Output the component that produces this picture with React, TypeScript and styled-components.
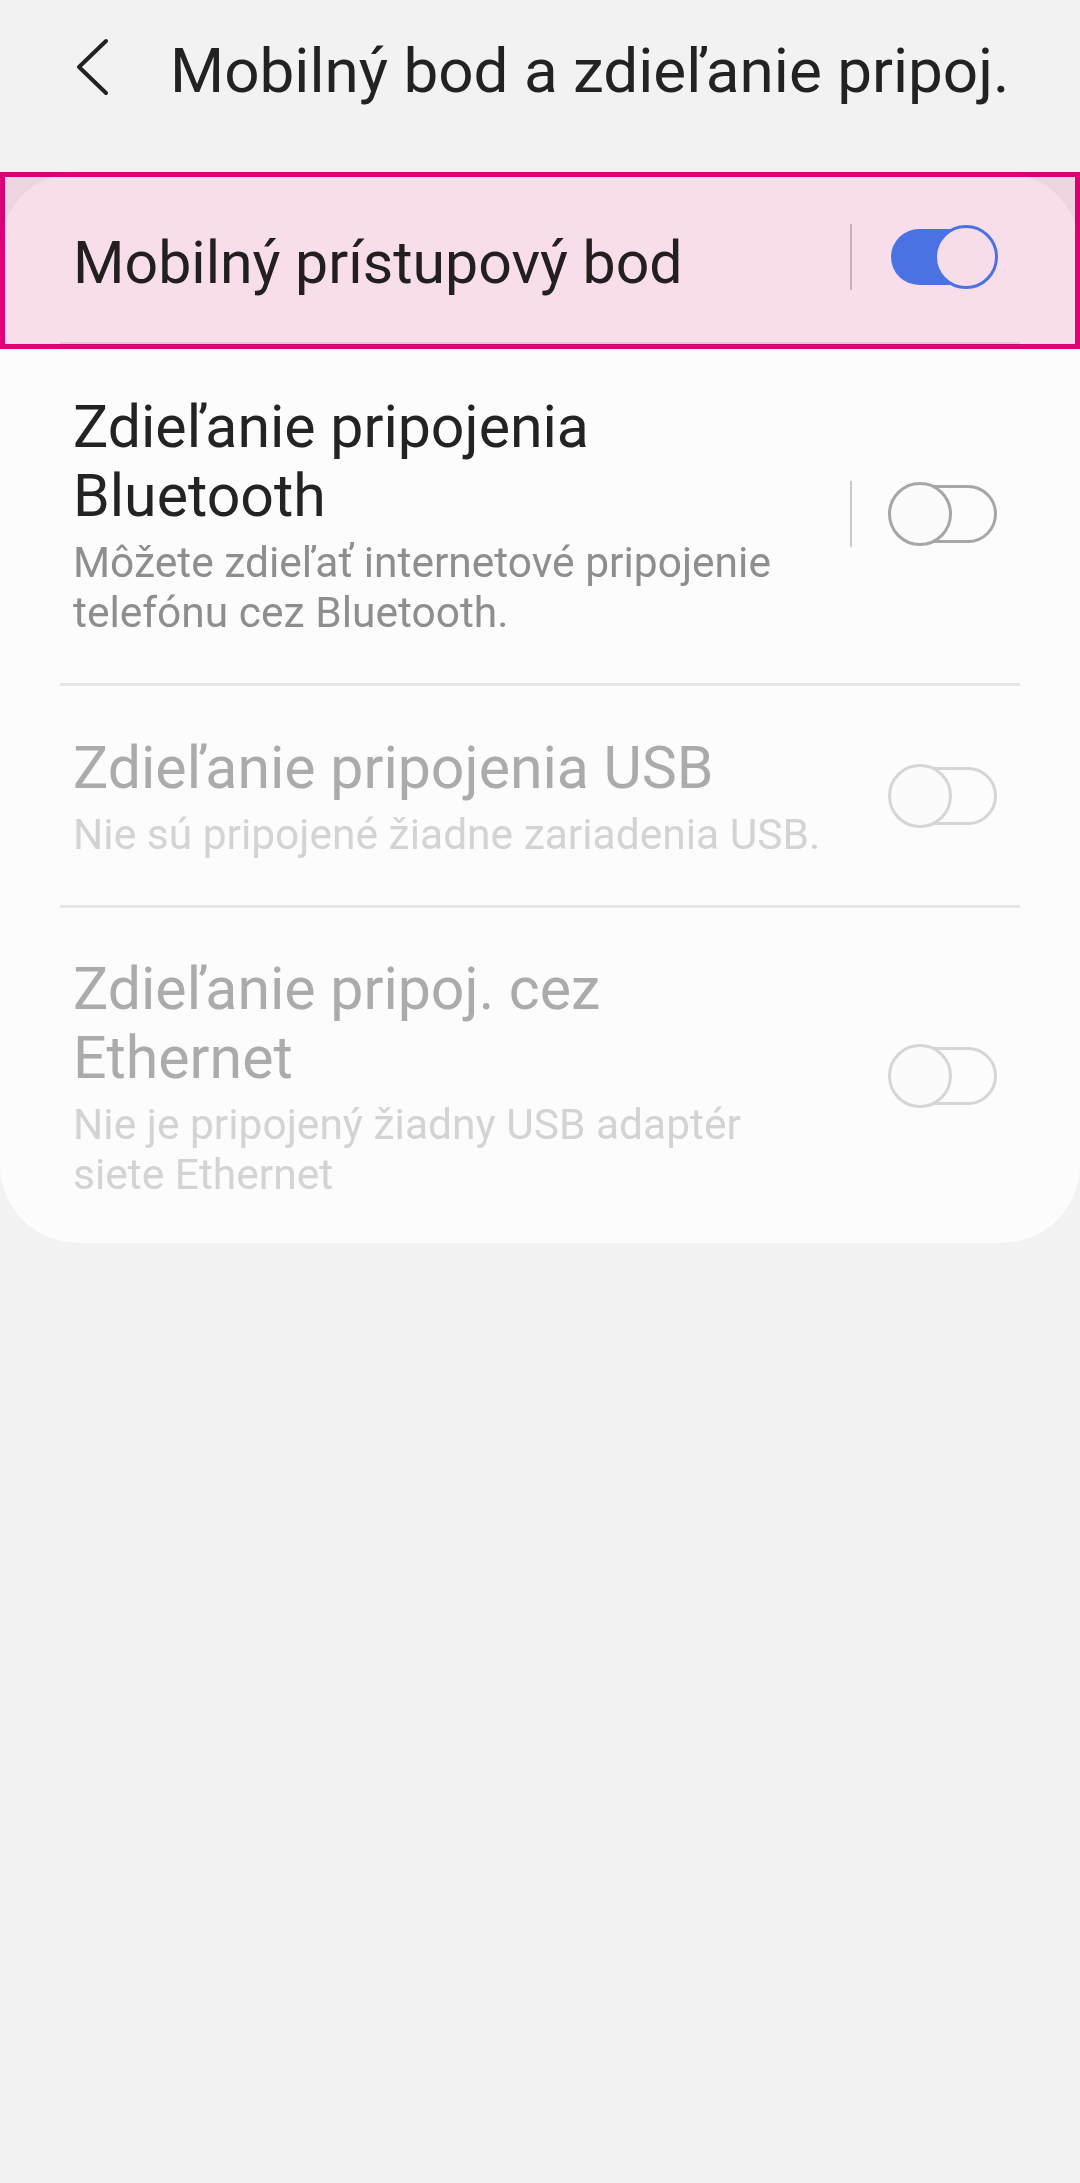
import React, { FC } from "react";
import styled, { createGlobalStyle } from "styled-components";

const FONT = `Roboto, "Noto Sans", "Liberation Sans", sans-serif`;
const BLUE = "#4C82F4";

const GlobalStyle = createGlobalStyle`
  html, body {
    margin: 0;
    padding: 0;
    background: #f2f2f2;
  }
  body {
    font-family: ${FONT};
    -webkit-font-smoothing: antialiased;
  }
  #root {
    min-height: 2183px;
  }
`;

const Page = styled.div`
  width: 1080px;
  min-height: 2183px;
  background: #f2f2f2;
`;

const Header = styled.header`
  display: flex;
  align-items: flex-start;
  height: 172px;
  padding-top: 35px;
  box-sizing: border-box;
`;

const BackButton = styled.button`
  display: flex;
  margin: 2px 0 0 75px;
  padding: 0;
  border: none;
  background: none;
  cursor: pointer;
`;

const Title = styled.h1`
  margin: 0 0 0 59px;
  font-family: ${FONT};
  font-size: 62px;
  line-height: 72px;
  font-weight: 400;
  color: #222222;
  white-space: nowrap;
`;

const CardWrap = styled.div`
  position: relative;
`;

const Card = styled.section`
  background: #fcfcfc;
  border-radius: 78px;
  overflow: hidden;
`;

/* focus highlight drawn over the first row */
const Highlight = styled.div`
  position: absolute;
  top: 0;
  left: 0;
  right: 0;
  height: 177px;
  box-sizing: border-box;
  border: 5px solid #e5007b;
  background: #fbe0ed;
  mix-blend-mode: multiply;
  pointer-events: none;
`;

const Row = styled.div`
  display: flex;
  align-items: center;
  padding: 0 82px 0 73px;
`;

const TextCol = styled.div<{ $pt: number; $pb: number }>`
  flex: 1;
  min-width: 0;
  margin-right: 25px;
  padding: ${(p) => p.$pt}px 0 ${(p) => p.$pb}px;
  display: flex;
  flex-direction: column;
  gap: 8px;
`;

const RowTitle = styled.div<{ $disabled?: boolean }>`
  font-size: 59px;
  line-height: 69px;
  color: ${(p) => (p.$disabled ? "#ababab" : "#232323")};
`;

const RowSub = styled.div<{ $disabled?: boolean }>`
  font-size: 42.5px;
  line-height: 50px;
  color: ${(p) => (p.$disabled ? "#d3d3d3" : "#8e8e8e")};
`;

const VDivider = styled.span<{ $hidden?: boolean }>`
  width: 2px;
  height: 66px;
  margin-right: 36px;
  background: #c9c9c9;
  visibility: ${(p) => (p.$hidden ? "hidden" : "visible")};
`;

const Separator = styled.div`
  height: 3px;
  margin: 0 60px;
  background: #e6e6e6;
`;

const ToggleBox = styled.span`
  position: relative;
  display: block;
  width: 110px;
  height: 64px;
  flex-shrink: 0;
`;

const Track = styled.span<{ $on: boolean; $color: string }>`
  position: absolute;
  left: 3px;
  right: 1px;
  top: ${(p) => (p.$on ? 4 : 3)}px;
  bottom: ${(p) => (p.$on ? 4 : 3)}px;
  box-sizing: border-box;
  border-radius: 30px;
  background: ${(p) => (p.$on ? BLUE : "transparent")};
  border: ${(p) => (p.$on ? "none" : `3px solid ${p.$color}`)};
`;

const Thumb = styled.span<{ $on: boolean; $color: string }>`
  position: absolute;
  top: 0;
  ${(p) => (p.$on ? "right: 0;" : "left: 0;")}
  width: 64px;
  height: 64px;
  box-sizing: border-box;
  border-radius: 50%;
  background: #fbfbfb;
  border: 3px solid ${(p) => (p.$on ? BLUE : p.$color)};
`;

interface ToggleProps {
  on?: boolean;
  disabled?: boolean;
}

const Toggle: FC<ToggleProps> = ({ on = false, disabled = false }) => {
  const color = disabled ? "#d5d5d5" : "#a6a6a6";
  return (
    <ToggleBox role="switch" aria-checked={on} aria-disabled={disabled}>
      <Track $on={on} $color={color} />
      <Thumb $on={on} $color={color} />
    </ToggleBox>
  );
};

interface SettingProps {
  title: string;
  subtitle?: string;
  on?: boolean;
  disabled?: boolean;
  divider?: boolean;
  pt: number;
  pb: number;
}

const SettingRow: FC<SettingProps> = ({ title, subtitle, on, disabled, divider, pt, pb }) => (
  <Row>
    <TextCol $pt={pt} $pb={pb}>
      <RowTitle $disabled={disabled}>{title}</RowTitle>
      {subtitle && <RowSub $disabled={disabled}>{subtitle}</RowSub>}
    </TextCol>
    <VDivider $hidden={!divider} />
    <Toggle on={on} disabled={disabled} />
  </Row>
);

const BackIcon = () => (
  <svg width="36" height="60" viewBox="0 0 36 60" fill="none">
    <path
      d="M31 4 L4 30 L31 56"
      stroke="#222222"
      strokeWidth="4"
      strokeLinecap="round"
      strokeLinejoin="round"
    />
  </svg>
);

export default function App() {
  return (
    <Page>
      <GlobalStyle />
      <Header>
        <BackButton aria-label="Späť">
          <BackIcon />
        </BackButton>
        <Title>Mobilný bod a zdieľanie pripoj.</Title>
      </Header>
      <CardWrap>
        <Card>
          <SettingRow title="Mobilný prístupový bod" on divider pt={56} pb={45} />
          <Separator />
          <SettingRow
            title="Zdieľanie pripojenia Bluetooth"
            subtitle="Môžete zdieľať internetové pripojenie telefónu cez Bluetooth."
            divider
            pt={47}
            pb={45}
          />
          <Separator />
          <SettingRow
            title="Zdieľanie pripojenia USB"
            subtitle="Nie sú pripojené žiadne zariadenia USB."
            disabled
            pt={47}
            pb={45}
          />
          <Separator />
          <SettingRow
            title="Zdieľanie pripoj. cez Ethernet"
            subtitle="Nie je pripojený žiadny USB adaptér siete Ethernet"
            disabled
            pt={46}
            pb={43}
          />
        </Card>
        <Highlight />
      </CardWrap>
    </Page>
  );
}
